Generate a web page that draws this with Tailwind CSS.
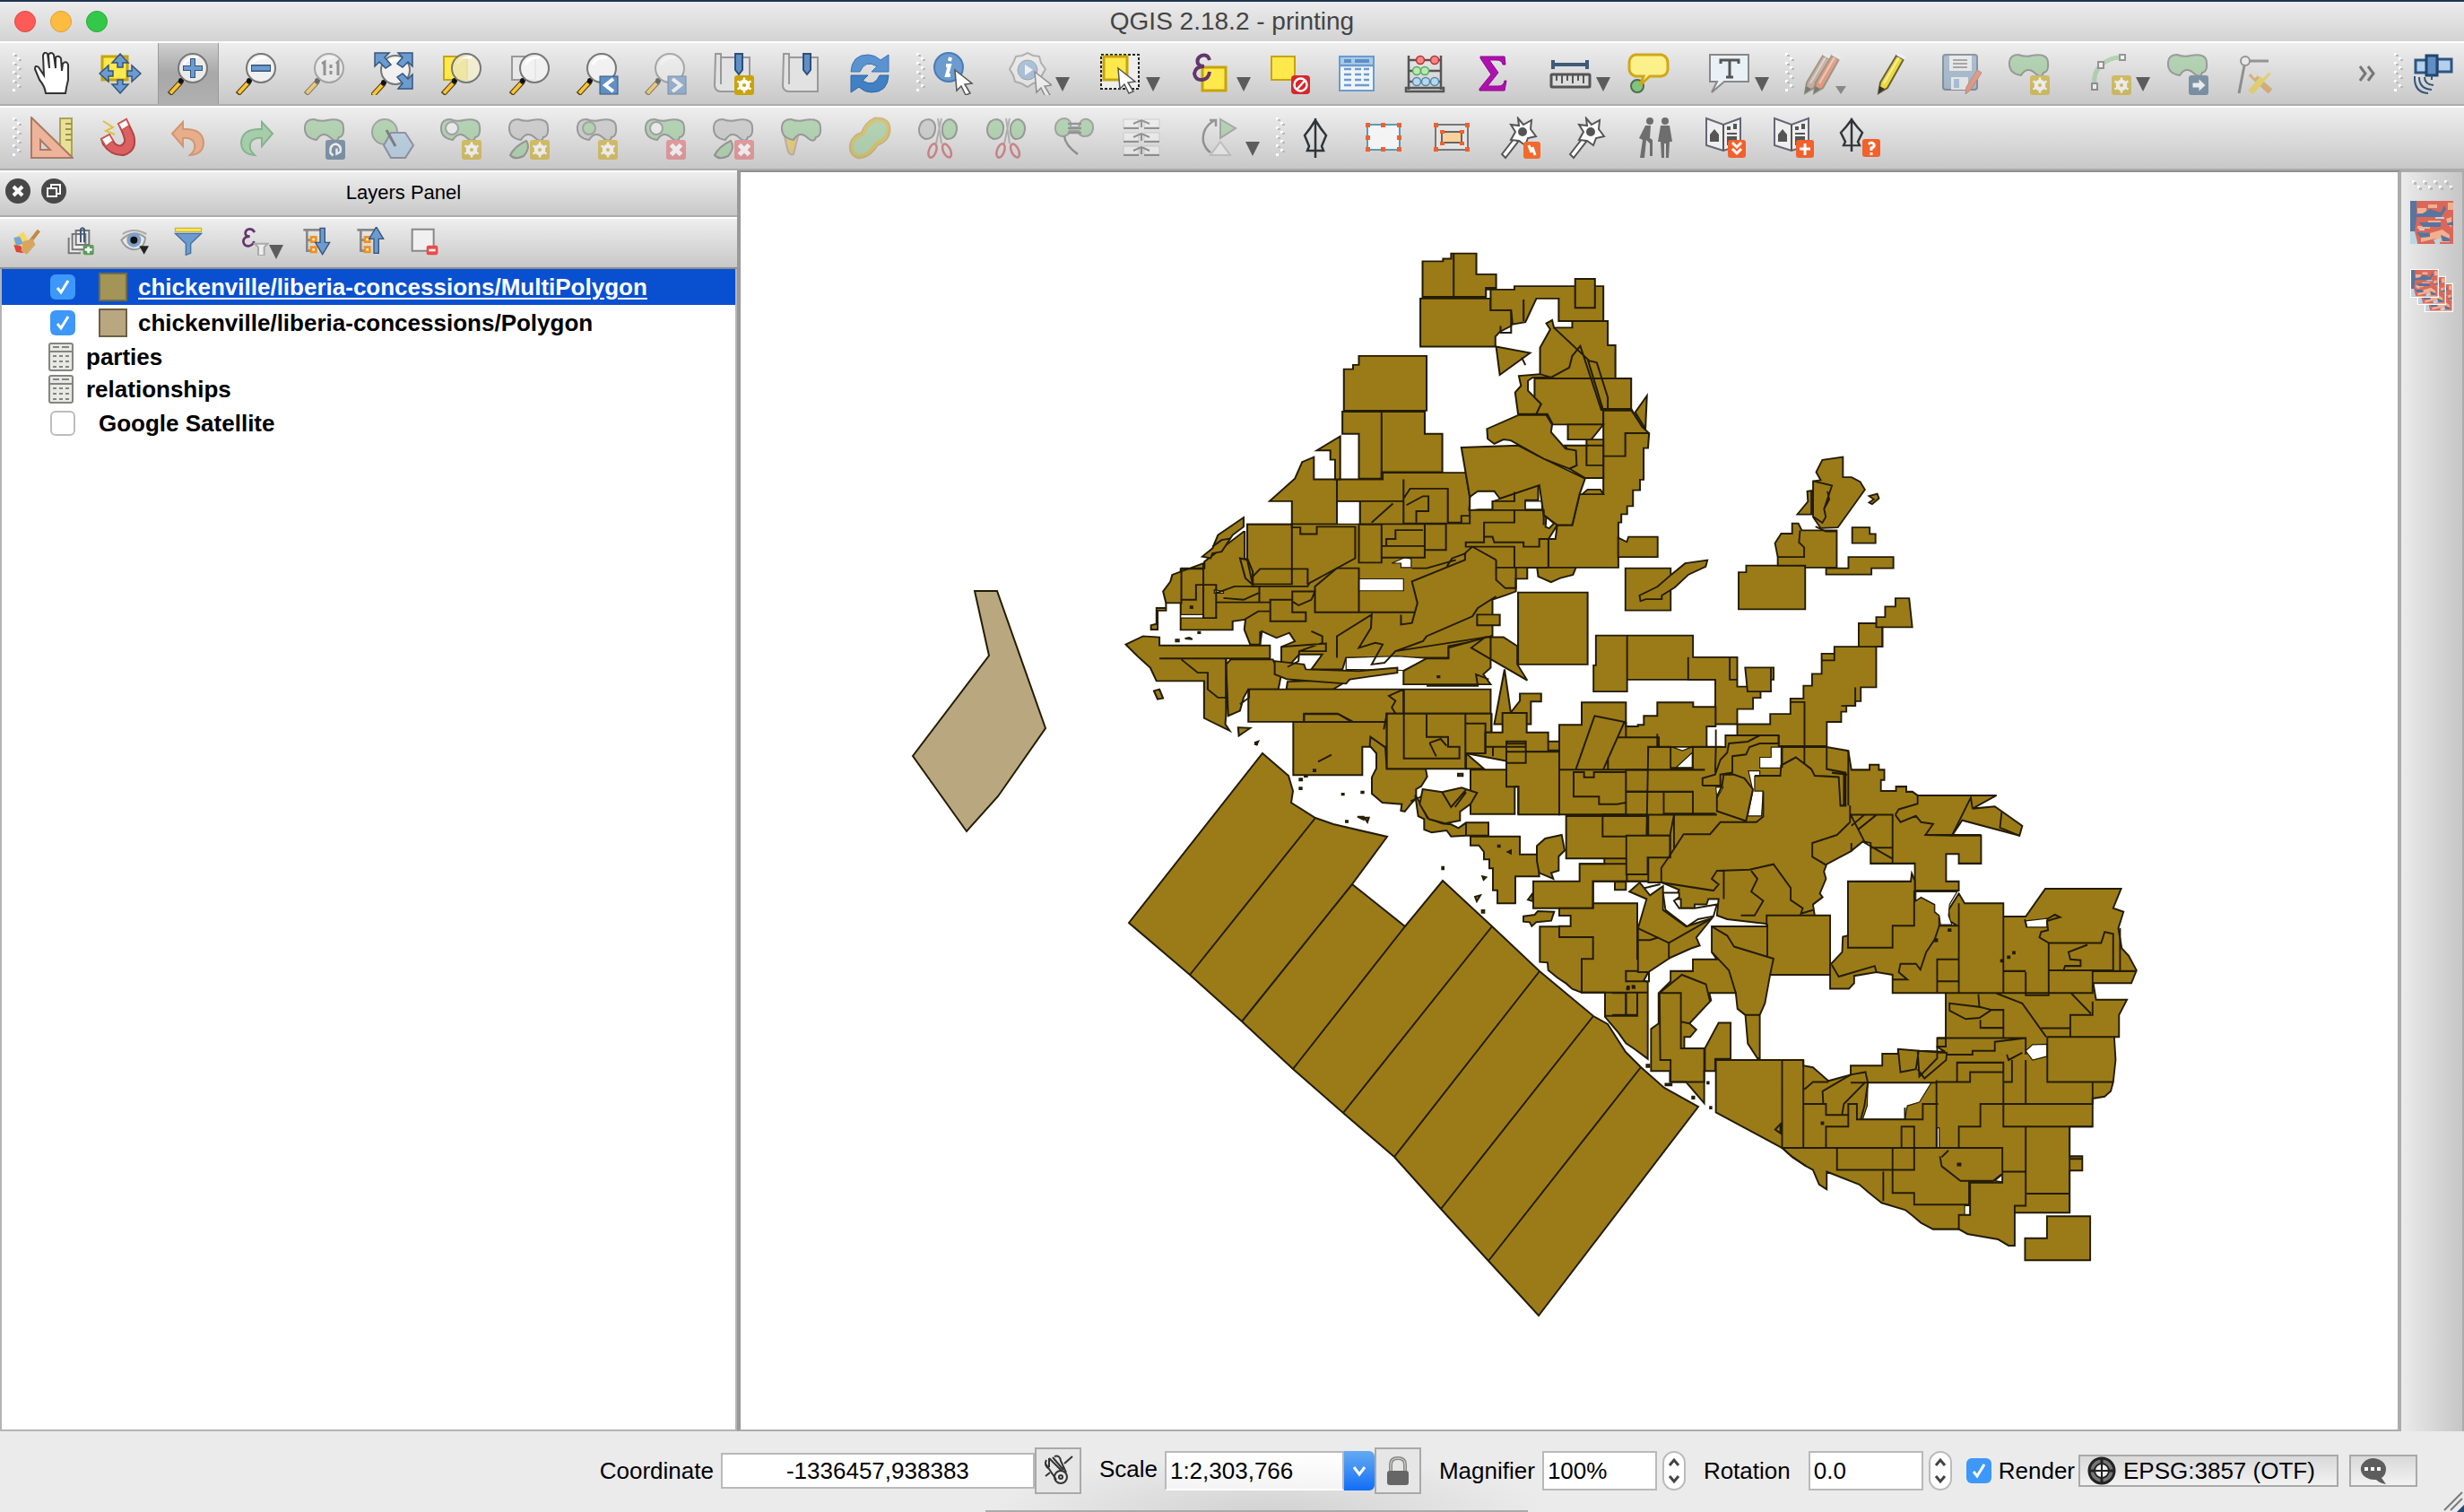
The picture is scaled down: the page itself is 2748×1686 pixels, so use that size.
<!DOCTYPE html>
<html lang="en">
<head>
<meta charset="utf-8">
<title>QGIS 2.18.2 - printing</title>
<script src="https://cdn.jsdelivr.net/npm/@tailwindcss/browser@4"></script>
</head>
<body class="flex min-h-screen flex-col overflow-hidden bg-[#ebebeb] font-['Liberation_Sans',Arial,sans-serif] text-[26px] leading-8 text-black">

<header class="relative flex h-[46px] shrink-0 items-center justify-center border-t-2 border-[#1f3450] bg-linear-to-b from-[#ececec] to-[#d3d3d3]">
  <div class="absolute left-4 flex gap-4">
    <button aria-label="Close" class="size-6 rounded-full border border-[#df4744] bg-[#fc5b57]"></button>
    <button aria-label="Minimize" class="size-6 rounded-full border border-[#de9f34] bg-[#fdbc40]"></button>
    <button aria-label="Zoom" class="size-6 rounded-full border border-[#27aa35] bg-[#34c84a]"></button>
  </div>
  <h1 class="text-[28px] text-[#444]">QGIS 2.18.2 - printing</h1>
</header>

<nav id="bar1" aria-label="Main toolbar" class="flex h-[72px] shrink-0 items-stretch border-t-2 border-b-2 border-t-white border-b-[#acacac] bg-linear-to-b from-[#eeeeee] to-[#c8c8c8]"></nav>
<nav id="bar2" aria-label="Digitizing toolbar" class="flex h-[72px] shrink-0 items-stretch border-t-2 border-b-2 border-t-white border-b-[#acacac] bg-linear-to-b from-[#eeeeee] to-[#c8c8c8]"></nav>

<main class="flex min-h-0 flex-1">
  <aside class="flex w-[822px] shrink-0 flex-col">
    <div class="relative flex h-[52px] items-center justify-center border-t-2 border-b-2 border-t-white border-b-[#acacac] bg-linear-to-b from-[#eeeeee] to-[#c8c8c8] pb-[2px] pl-[78px]">
      <div class="absolute left-[6px] flex gap-3 pb-1">
        <button aria-label="Close panel"><svg class="size-7" viewBox="0 0 28 28"><circle cx="14" cy="14" r="14" fill="#484848"/><path d="M9 9L19 19M19 9L9 19" stroke="#fff" stroke-width="4"/></svg></button>
        <button aria-label="Float panel"><svg class="size-7" viewBox="0 0 28 28"><circle cx="14" cy="14" r="14" fill="#484848"/><path d="M11 11V7H21V17H18M7 11H17V20H7Z" fill="none" stroke="#fff" stroke-width="2"/></svg></button>
      </div>
      <h2 class="text-[22px]">Layers Panel</h2>
    </div>
    <div id="bar3" class="flex h-[58px] shrink-0 items-stretch border-t-2 border-b-2 border-t-white border-b-[#8f8f8f] bg-linear-to-b from-[#eeeeee] to-[#c8c8c8] pb-1"></div>
    <ul class="flex-1 border-x-2 border-b-2 border-[#b4b4b4] bg-white font-bold">
      <li class="flex h-10 items-center bg-[#0950d0] pl-[54px] text-white">
        <span class="grid"><input id="l1" type="checkbox" checked class="col-start-1 row-start-1 size-7 appearance-none rounded-md bg-[#3d98f9]"><svg class="pointer-events-none col-start-1 row-start-1 size-7" viewBox="0 0 28 28"><path d="M8 15L12 20L20 7" fill="none" stroke="#fff" stroke-width="3"/></svg></span>
        <span class="mx-3 ml-[26px] size-8 border-2 border-[#726c44] bg-[#a39555]"></span>
        <label for="l1" class="underline decoration-2 underline-offset-3">chickenville/liberia-concessions/MultiPolygon</label>
      </li>
      <li class="flex h-10 items-center pl-[54px]">
        <span class="grid"><input id="l2" type="checkbox" checked class="col-start-1 row-start-1 size-7 appearance-none rounded-md bg-[#3d98f9]"><svg class="pointer-events-none col-start-1 row-start-1 size-7" viewBox="0 0 28 28"><path d="M8 15L12 20L20 7" fill="none" stroke="#fff" stroke-width="3"/></svg></span>
        <span class="mx-3 ml-[26px] size-8 border-2 border-[#6b6048] bg-[#b9a77f]"></span>
        <label for="l2">chickenville/liberia-concessions/Polygon</label>
      </li>
      <li class="flex h-9 items-center gap-[14px] pl-[52px]"><svg class="h-8 w-7" viewBox="0 0 28 32"><use href="#tbl"/></svg>parties</li>
      <li class="flex h-9 items-center gap-[14px] pl-[52px]"><svg class="h-8 w-7" viewBox="0 0 28 32"><use href="#tbl"/></svg>relationships</li>
      <li class="flex h-10 items-center gap-[26px] pl-[54px]">
        <input id="l3" type="checkbox" class="size-7 appearance-none rounded-md border-2 border-[#bdbdbd] bg-white"><label for="l3">Google Satellite</label>
      </li>
    </ul>
  </aside>

  <section aria-label="Map canvas" class="min-w-0 flex-1 border-2 border-r-4 border-l-4 border-[#acacac] border-t-[#909090] border-l-[#999] bg-white">
    <svg class="block h-full w-full" viewBox="826 192 1848 1402" fill="#9b7b17" stroke="#231c04" stroke-width="2">
      <path fill="#b9a77f" d="M1087 659H1112L1166 812L1113 888L1078 927L1018 843L1103 731Z"/>
      <!-- offshore blocks -->
      <path d="M1408 840L1437 865L1442 882L1440 895L1467 912L1487 919L1547 933L1508 986L1567 1033L1609 982L1664 1033L1717 1083L1777 1133L1793 1142L1813 1173L1830 1190L1856 1213L1894 1234L1716 1467L1660 1406L1607 1348L1555 1290L1498 1241L1442 1192L1385 1139L1327 1087L1259 1029Z"/>
      <path fill="none" d="M1327 1087L1467 912M1385 1139L1508 986M1442 1192L1567 1033M1498 1241L1664 1033M1555 1290L1717 1083M1607 1348L1777 1133M1660 1406L1830 1190"/>

      <!-- north-west concessions -->
      <g transform="translate(1240 260) scale(.40816 .3699)" stroke-width="5">
        <path d="M615 742H740V722H967L978 795L1000 778H1045L1060 800L1165 760V805H1130V835H1180L1217 880L1193 922V1008H1135V1042H1104V1080L1080 1090L1040 1105V1215L990 1230L920 1245V1280H640L630 1315H545L575 1270H512L480 1308H463V1247L500 1230L485 1205L450 1220L410 1200L405 1240H378L362 1195L365 1165L330 1170V1196H188V1012L253 1010V990L360 900H363V980L385 1000L370 980V878H492V808H431L500 740L520 690L552 675V742Z"/>
        <path fill="#fff" stroke-width="3" d="M615 808H678V877H615ZM675 1042H797V1078H675ZM765 995L800 978L818 982V1008H790V995ZM975 835L980 790L1000 778H1045L1062 800L1040 808V832H1003ZM1130 808H1175V832H1130ZM280 1075L305 1080V1085H280ZM188 1150H250V1160H188ZM640 1280L780 1275L860 1282L797 1318L640 1315Z"/>
        <path d="M849 85H905V77H927V61H996V124H1050V165H1022V192H849ZM843 197H1035V232H1091V280L1060 297L1048 312V342H843Z"/>
        <path d="M1035 170H1100V160H1343V265H1221V197H1160L1130 268L1095 275L1091 232H1035Z"/>
        <path d="M1266 138H1320V225H1266ZM1050 342L1143 361L1060 427Z"/>
        <path fill="none" d="M934 61V192M1125 200V265M1022 192V170H1035M1091 275V300H1062V280M1120 375L1130 398"/>
        <path d="M675 370H860V535H634V410H659V397H675ZM630 538H855V605H903V720H737V740H675V605H630Z"/>
        <path fill="none" d="M737 538V740"/>
        <path d="M1187 272L1203 262L1208 285H1258V265H1355V338H1376V438H1200L1170 430V345L1198 290Z"/>
        <path d="M1112 430L1170 425L1200 435H1150L1137 445V475L1173 515L1160 545H1110L1102 480L1118 460Z"/>
        <path d="M1155 438H1419V530H1343V577H1205L1190 545H1160L1173 515L1155 495Z"/>
        <path d="M1462 490L1458 590L1430 540Z"/>
        <path d="M1343 535H1420L1450 585L1468 603L1465 648H1453V743H1443V775H1424V823H1408V847H1392V872H1384V1008H1193V922H1212L1217 880H1258L1278 787H1343Z"/>
        <path fill="none" d="M1208 285L1305 385L1325 390L1355 495V535M1338 535L1280 340L1258 370L1250 405L1200 435M1343 535L1300 380M1343 672H1403V603H1468M1419 530L1450 585"/>
        <path d="M1238 640H1343V738H1293L1250 710L1270 700ZM1246 577H1343L1310 622H1246ZM1297 622H1343V700H1297ZM1285 787L1300 773H1335L1343 787Z"/>
        <path d="M955 646L1110 640L1180 680L1293 740L1278 787L1258 880H1217L1180 850L1168 760L1060 800L1045 778H1000L978 795Z"/>
        <path d="M1025 590L1112 548H1187L1203 577L1200 600L1240 650L1268 655L1270 700L1250 710L1180 680L1090 625L1070 622L1045 635L1027 620Z"/>
        <path d="M560 655L624 612V742H610V683H597V655ZM148 1115L140 1080L160 1050L165 1030L250 995V1010H190V1115ZM247 975L275 950L290 910L360 857V885L330 910L300 960L275 965L270 980Z"/>
        <path d="M107 1195V1182L122 1178V1130H148V1115V1138H125V1195Z"/>
        <path d="M370 878H492V887H515V907H560V885H665V980L540 1055L535 1065H385V1020L370 980Z"/>
        <path fill="#fff" d="M1187 855L1208 875L1195 890L1185 885Z"/>
        <path d="M1162 1008H1268L1260 1030L1225 1040L1200 1052L1165 1035ZM1110 1083H1300V1300H1110ZM998 1150H1060V1182H998Z"/>
        <path d="M38 1240L85 1215L130 1218V1243H432V1282H312V1450L310 1480L322 1500L252 1462V1350H122L105 1310L70 1275ZM312 1300L325 1285H440L462 1335L455 1375H373L360 1400L350 1440L318 1455Z"/>
        <path d="M480 1352L650 1345L605 1375H477Z"/>
        <path d="M445 1290L525 1300L530 1315L675 1320L780 1310V1325L650 1345L640 1358L480 1345L445 1330Z"/>
        <path d="M797 1320L860 1282H920V1250L1035 1215V1310L1015 1330L1035 1360H797ZM982 1250L1020 1218H1070L1108 1245V1300L1135 1348L1060 1300Z"/>
        <path d="M373 1375H1035V1448H750V1473H373Z"/>
        <path d="M1045 1480L1073 1315L1090 1445L1115 1410V1388H1173V1412H1145V1480ZM115 1380L130 1375L140 1402L125 1405ZM345 1490L378 1492L347 1515Z"/>
        <path fill="none" d="M525 1473V1450H620L655 1473M797 1375V1448M797 1375L757 1395L775 1410L765 1430L775 1448M615 742V877H492V1058M615 808H797V742M678 808V877H797V808M797 742V808M797 875H978V795M797 875V800L815 770H918V872M805 820L850 793H865V838H832V872M710 872L768 815M675 878H737V993H675ZM737 877H855V978H737ZM737 943H855M750 943V922H775V895H850M858 877H913V955H858M978 852H955V872H918M978 835H1040V808H1100V780M1040 835H1100V872H1017V932H967V945H1100V1008M1100 835H1180V880M1212 922H1168V945H1125V932H1045L1040 915H1017M1100 945V1008H1193M1050 985L985 945L965 965V985L820 1050L835 1115L820 1175L790 1180V1150M1050 985V1045L1075 1070H1104V1008H1050M968 965L930 980L915 1005M820 1010H860L940 985M555 1065L615 1010H675V1143H555ZM675 1143H830M675 1078V1042M385 1058H492V1012H535V1060M385 1058V1035L405 1012H492M350 980L370 985L385 1060L365 1040ZM433 1105H493V1143H530V1170H433ZM493 1080H555L545 1105L510 1122L493 1110ZM190 1012H250V1150M188 1105H230V1060H285V1160H250V1058M285 1113H403V1065H335L285 1085M305 1100L360 1105L400 1085M285 1113H433M362 1165L400 1140H430M615 1280V1215L710 1150L708 1190L675 1250L720 1235L740 1240L710 1300L745 1295L775 1260L850 1230L860 1215L985 1155L1000 1130L1050 1095M775 1260L1040 1215M545 1200L575 1215V1235L512 1260M463 1247L585 1237V1260H512L510 1290L480 1308M130 1282H312M190 1285L235 1325H262V1375L290 1400H312V1282M275 945L300 925L325 920M375 1375V1400L350 1420M405 1200V1240M860 1365H1000L995 1330L1030 1345"/>
        <path d="M175 1225h8v6h-8zM200 1222l12-3 8 5zM236 1202h5v4h-5zM392 1535l8-3-4 9zM215 1125h5v5h-5zM890 1335h5v4h-5z"/>
      </g>

      <!-- north-east islands and corridor -->
      <g transform="translate(1600 480) scale(.38265 .35714)" stroke-width="5">
        <path d="M535 335L560 348L565 332H650V395H535ZM556 430H688V562H556Z"/>
        <path d="M597 515L650 487L690 450L730 415L795 405L790 425L740 450L700 490L662 515V527H615L600 533Z"/>
        <path d="M470 640H753V708H882V800H950V835H928V870H882V917H818V778H561V815H463V733H470Z"/>
        <path d="M905 740H988V778H980V815H912ZM886 443H908V422H1080V558H886Z"/>
        <path fill="none" d="M561 640V778M739 708V778H818M860 708V778H882M980 740V778"/>
        <path d="M1000 422V395L992 352L1010 322H1042V290H1060L1070 312H1172V428H1080V422Z"/>
        <path d="M1098 188V262L1057 262L1088 222L1086 190ZM1112 130L1130 92L1190 83V146H1215L1240 160L1254 185L1175 303L1125 305L1103 270V158L1125 155Z"/>
        <path fill="none" d="M1065 312L1062 350L1077 365V395H1000M1103 158L1158 172L1135 245L1140 270L1130 288L1105 270M1145 190L1150 215L1135 245M1110 300L1140 315H1172"/>
        <path d="M1266 205L1290 198L1295 212L1275 230L1266 225L1280 215ZM1217 303H1268V323H1285V352H1217ZM1206 395H1337V430H1273V450H1141V430H1206Z"/>
        <path d="M1236 602H1287V583H1313V550H1343V524H1383L1392 614H1305V675H1287V802H1242V845H1226V860H1200V878H1185V910H1143V985H850V955H882V917H978V885H1037V837H1075V797H1100V760H1128V697H1165V675H1236Z"/>
        <path fill="none" d="M1236 675H1305V614H1287V602M1128 718H1165V697M1037 848H1078V988M1226 802V860H1185"/>
      </g>

      <!-- central coast -->
      <g transform="translate(1400 760) scale(.33333)" stroke-width="6">
        <path d="M127 135H440V218H358V313H127Z"/>
        <path d="M385 185L435 220L440 292H570L575 318L555 350L538 360V390L520 410L500 435L487 432L490 410L425 405L390 375V320L405 290V240L383 215Z"/>
        <path d="M440 107H790V170H770V240H705V292H440Z"/>
        <path d="M705 240L765 292H705Z"/>
        <path d="M770 170H827V105H908V170H980V200H1017V235H905V272L835 265L705 240H770Z"/>
        <path d="M720 295H840V235H1017V445H880V352H868V443H720Z"/>
        <path d="M535 380L545 395L575 455L625 475L655 478L680 490L705 472H780V515H705L655 518L640 498L590 505L565 495V460L545 450Z"/>
        <path d="M560 360L625 370L690 355L742 372L720 410L685 435V465L635 475L580 460L550 410Z"/>
        <path fill="none" d="M497 27V257H683V218H645V185H573V107M703 107V292M705 140H770V240M583 205L620 192L640 215M583 205L605 250M790 107V170M770 218H905M840 200H905V272H840ZM840 208H905M980 200V230H1017M795 220V250M840 272V352H880V445M625 370L655 420L705 362M668 420L705 370M705 472V515M520 400L555 385"/>
        <path d="M720 518H885V578H942L945 600L950 652H870V742H810V698H795V625H783V595H765V570L748 548H720Z"/>
        <path d="M942 550L970 525L1025 513L1035 565L1015 585V632L990 640L997 660L950 640L942 600Z"/>
        <path d="M1017 145H1092V70H1240V150H1280V145H1300V115H1345V70H1465V85H1540V150H1510V218H1560V445H1017Z"/>
        <path d="M1040 450H1400V400H1560V668H1245V668H1130V758H930V668H1085V610H1168V592H1040Z"/>
        <path d="M897 785L935 780L945 768L1000 770L990 800L940 805L925 818L918 805L897 803ZM912 730L928 708V735ZM1203 670H1240V697H1203Z"/>
        <path d="M1017 758H1130V742H1278V928H1317V968L1300 1000L1313 1005V1262L1270 1230L1240 1210L1215 1175L1170 1122V1040H1092L1060 1028L1040 1010L1010 990L980 965L978 940L952 938V820H1017V818H1055V783H1017Z"/>
        <path fill="none" d="M1017 235V445M1073 292L1135 115L1235 135L1165 292M1017 295H1315V218H1390V292H1462V218H1510M1210 187H1350V218M1240 135V187M1345 175V218M1180 255V292M1240 292V368H1465V443H1365V368M1065 303H1100V320H1133V303H1240V405L1210 410H1150V385H1065ZM1240 368V445H1162V518H1400V445M1240 518H1385V592H1310V645H1245V610M1085 610H1243V668M1168 592H1243M1130 758V668H1360M1310 592H1365M1017 818V855H1130V928H1092V1040H1313M1240 1040V1118H1170M1240 1118H1278V1040M1280 830L1355 870L1385 875V928M1240 968H1317V1003H1240ZM163 130V107H275L325 133M210 268L255 245M440 107L430 160"/>
        <path d="M148 325h8v6h-8zM165 315h8v3h-8zM148 355h7v5h-7zM195 295h6v5h-6zM290 375h6v4h-6zM355 368h7v5h-7zM342 452l20 0 0 10zM365 455l15 0-5 15zM303 466h6v4h-6zM678 308l16 0 0 8-16 0zM625 620h5v8h-5zM760 652l12 3-8 8zM735 720l18-5-12 20zM758 765h8v8h-8zM812 548h6v5h-6zM845 570l10-5 0 10zM0 205h6v5h-6zM1245 1020h5v5h-5zM1262 1018h5v5h-5z"/>
      </g>

      <!-- south-east -->
      <g transform="translate(1800 780) scale(.38265 .40816)" stroke-width="5">
        <path d="M100 130H325V98H480V130H620L683 140L692 192H745V178H772V192H788V220H778V250H822V238H852V252H870L885 262H1115L1045 298L1110 292L1190 345L1182 372L1015 330L985 372H1070V448H1005V422H968V497H1005V522H877V448H748V392L725 388L690 415L620 450L612 470L618 490L600 530L608 540L580 560L585 590L448 613L330 600L300 590L305 545H275L270 560H235V570H195V545H175L190 520L140 500H100V315H175L163 372H95Z"/>
        <path fill="#fff" d="M425 158H458V130H487V187H425ZM180 187L228 145V187ZM170 130H225L200 140ZM392 195H425V210H410V250H435L430 318H390L405 250ZM297 240H318L300 270ZM100 372H165V432H100Z" stroke-width="3"/>
        <path d="M36 372H163V432H98V478H36Z"/>
        <path fill="none" d="M165 130V187H230V130M297 82V130L295 200M345 155V200M297 312H175V410M35 252H230V312H145V252M35 192H265M230 252V312M175 315H300M320 205H350L380 215L405 245L385 332L300 305V265L315 235ZM258 235H310V205L345 200V155L385 150L395 130L425 120H480V98M258 235V215L295 205L310 165L330 145L335 120L390 115L425 98M490 187V130M410 208H485L487 180L530 158L575 190L585 208L655 212L660 290H675V200L620 190V130M555 130V175M683 140V290M670 205V290M635 200L680 205M435 252V320L415 335H310L280 368H203L160 430L138 460V500L290 522L305 505L285 490L300 468L395 465L465 450L515 515V548L550 570L545 585L580 575M320 468V545M400 468L418 490L400 525L435 550L410 590L370 590M688 290V335L650 370L578 392V430L618 452M690 315H812V448M690 315L730 388M692 345L730 315M712 355L765 315M748 405H812M692 392V415M725 388L765 410L812 435M820 315L835 335L880 318L895 335L930 340L908 370L985 372L1040 268L1045 298M820 315L830 300L885 285V262M1130 308L1125 350L1182 372M905 370H1070M135 505L45 525"/>
        <path d="M45 525L75 500L105 535L143 510V575L210 620L285 598L240 650L250 672L225 680L165 705L100 745H70V625L95 545Z"/>
        <path fill="none" d="M70 625L160 665L285 598M160 665V705M70 657H105L130 650"/>
        <path fill="#fff" d="M143 528H190V540L175 550L190 570H235L300 560L290 592L245 600L213 620L150 575Z"/>
        <path d="M165 742H230V710H300L285 690V620H445V590H630V752H455L440 830L425 862V980H418L390 940L383 862L360 845L355 802H278L283 822L220 885L240 902L222 922H205V953H265L305 883H340V982H295V1015H263V1103L210 1045H163V1015H108V900L130 885V802L165 770Z"/>
        <path fill="none" d="M285 620L330 645L350 675L465 708L455 752M447 613V700M285 690L335 740L355 802M135 800L198 752L268 778L280 825M133 802H195V953H263V1045H165V985H135ZM383 862H425M265 953V1015M195 880L220 885M-5 802H35V862H-5M35 862H68V802"/>
        <path d="M682 497H865L868 475L877 495V550L895 540L935 560V580L948 590V618H1000L978 605L975 575L1005 530L1022 557H1135V593H1200L1257 517H1478L1455 570L1485 580L1470 625L1480 680L1500 700L1523 740L1508 775H1397L1405 820H1495L1472 862V922H1458L1462 985L1455 1045L1448 1070L1430 1085L1395 1090V1167H1328V1248H1365V1287H1328V1402H1168V1492H1150L1120 1475L1030 1460L1005 1447H930L895 1430L870 1410L850 1395L780 1375L740 1345L715 1325L620 1290V1338L598 1325L580 1285L560 1275L520 1250L490 1225L297 1128V985H552V1000L580 1005L625 1042L690 1025V1000H782V968H828V955L890 960L965 962L942 950V925H967V802H812V752L765 745L700 755V775L685 790H630V725L665 690L667 648L682 645Z"/>
        <path fill="#fff" d="M740 1047H925L890 1100L855 1110L848 1147H725L738 1110ZM1200 605L1262 598V622H1203ZM1200 960L1220 943L1262 942V975L1220 985ZM1022 1383H1038V1408H1022ZM942 1170H948V1225H942ZM1110 1315L1132 1298V1318ZM880 525H1000L978 560L975 590L985 615H952L948 590L935 580V560L895 540L880 550Z" stroke-width="3"/>
        <path fill="none" d="M875 522V618H812V678H682V640M948 618L935 655L910 690L893 738L880 722H835L830 745L855 765H812M635 725L655 757L760 728L765 745M942 800V710H1005V770H942M1005 557V802H968M1135 593V802H1200M1200 745V808H1267V665H1420L1430 635L1455 640V740H1267M1135 742H1200M1267 802H1395V742H1520M1005 802H1267M1267 665L1240 650L1245 635L1265 630L1262 605L1300 595L1285 588L1262 600M1197 600L1203 622M1475 625V740M1380 670L1325 690L1330 710L1360 712V728H1315L1310 740M1062 805L1065 840L978 830V850L1025 873L1065 870L1100 848L1065 840M1100 848H1135V925M1068 875V897H1135M1115 803L1190 830L1260 922M1245 898H1330V922M1330 898V862H1395V825M1333 803L1390 858M942 925H1200V970M967 925V948H942V980L890 1030L885 960M967 970H1045V960H1110V935L1200 925M1263 922H1458M1263 922V1045H1455M1200 985V1105H1395V1045M1000 1045V992H1135V1105M1160 985V1045H1135M942 1045H1038V1018H1135M1135 1105H1068V1167H1005V1225M1135 1105V1167H1395M1200 1105H1135M1200 1167V1350M1328 1167V1402M1203 1350H1328M1200 1350V1383H1168V1402M1328 1255H1365M490 985V1225H1132V1290H1200M552 985V1225M552 1105H618V1135H683V1105H708V1147H900V1105H945M618 1225V1167H683V1135M650 1225V1285H875V1167H838V1225M812 1225V1348H875V1380H1035V1320H1132V1290M785 1290V1370M955 1250L975 1232M950 1248L955 1275L1010 1315H1105L1132 1295M1038 1320V1408H1005V1450M610 1105L608 1070L690 1025L733 1018L740 1047L730 1110L720 1145M555 1065L580 1045H625M665 1133L670 1105L733 1045M828 955L835 1018L880 1010L888 960L970 965L968 985L905 1035L885 1010M690 1047H940M940 1040V1225M848 1147V1115M490 1225L520 1250L560 1275M470 1175L485 1160V1185ZM1145 970L1150 985L1190 965"/>
        <path d="M1262 1412H1388V1532H1198V1472H1262Z"/>
        <path d="M605 1155h5v5h-5zM1002 1268h8v5h-8zM975 628h6v4h-6zM935 655h7v5h-7zM1128 712h6v4h-6zM1148 702h5v4h-5zM1163 690h5v4h-5zM95 998h8v6h-8zM150 1050h18v4h-18zM228 1085h6v5h-6zM272 1045h4v4h-4zM280 1113h4v4h-4zM38 788h5v4h-5zM55 784h5v4h-5z"/>
      </g>
    </svg>
  </section>

  <aside aria-label="Raster toolbar" class="flex w-[70px] shrink-0 flex-col items-center border-t-2 border-r-2 border-[#acacac] bg-linear-to-r from-[#ebebeb] to-[#c6c6c6] pt-2">
    <svg class="mb-3 h-3 w-12" viewBox="0 0 48 12"><path d="M2 1h3v3H2zM8 7h3v3H8zM14 1h3v3h-3zM20 7h3v3h-3zM26 1h3v3h-3zM32 7h3v3h-3zM38 1h3v3h-3zM44 7h3v3h-3z" fill="#fff"/><path d="M4 3h3v3H4zM10 9h3v3h-3zM16 3h3v3h-3zM22 9h3v3h-3zM28 3h3v3h-3zM34 9h3v3h-3zM40 3h3v3h-3zM45 9h3v3h-3z" fill="#b9b9b9"/></svg>
    <button aria-label="Local stretch" class="mb-7"><svg class="size-12" viewBox="0 0 48 48"><use href="#heat"/></svg></button>
    <button aria-label="Full stretch"><svg class="size-12" viewBox="0 0 48 48"><g transform="translate(17 17) scale(.62)"><path fill="#fff" d="M-2-2H50V50H-2Z"/><use href="#heat" width="48" height="48"/></g><g transform="translate(9 9) scale(.62)"><path fill="#fff" d="M-2-2H50V50H-2Z"/><use href="#heat" width="48" height="48"/></g><g transform="translate(1 1) scale(.62)"><path fill="#fff" d="M-2-2H50V50H-2Z"/><use href="#heat" width="48" height="48"/></g></svg></button>
  </aside>
</main>

<footer class="relative flex h-[90px] shrink-0 items-center justify-end bg-[#ebebeb] pr-[52px] pb-[2px]">
  <div class="absolute bottom-0 left-[40%] h-16 w-[23%] bg-radial-[at_50%_100%] from-[#d2d2d2] to-[#ebebeb00] to-70%"></div>
  <div class="absolute bottom-0 left-[40%] h-[2px] w-[22%] bg-[#aaa]"></div>
  <label for="coord" class="relative mr-2">Coordinate</label>
  <input id="coord" value="-1336457,938383" class="relative h-10 w-[350px] border-2 border-[#b9b9b9] bg-white text-center">
  <button aria-label="Toggle extents" class="relative mr-5 grid h-[52px] w-[52px] place-items-center border-2 border-[#a9a9a9] bg-[#e6e6e6]"><svg class="size-9" viewBox="0 0 36 36" fill="none" stroke="#333" stroke-width="2"><circle cx="21" cy="25" r="7"/><circle cx="21" cy="25" r="2"/><path d="M4 10L16 28M8 4L22 18M12 3L24 17M14 2Q20 0 21 7L27 20M5 6Q2 12 8 16M25 10L34 2M4 24L9 20M8 4V14"/></svg></button>
  <label for="scale" class="relative mr-2 pb-1">Scale</label>
  <div class="relative flex h-11 w-[234px]">
    <input id="scale" value="1:2,303,766" class="w-[200px] border-2 border-[#b9b9b9] border-b-white bg-linear-to-b from-white to-[#f4f4f4] pl-1">
    <button aria-label="Choose scale" class="grid flex-1 place-items-center rounded-r-md bg-linear-to-b from-[#62aaf3] to-[#0f6df6]"><svg class="size-4" viewBox="0 0 16 16"><path d="M2 4L8 12L14 4" fill="none" stroke="#fff" stroke-width="3"/></svg></button>
  </div>
  <button aria-label="Lock scale" class="relative mr-5 grid h-[52px] w-[52px] place-items-center border-2 border-[#a9a9a9] bg-[#e6e6e6]"><svg class="size-9" viewBox="0 0 36 36"><path d="M10 19V11Q10 4 18 4T26 11V19" fill="none" stroke="#8a8a84" stroke-width="4"/><path d="M10 19V11Q10 4 18 4T26 11V19" fill="none" stroke="#ddd" stroke-width="1"/><rect x="6" y="18" width="24" height="16" rx="3" fill="#666"/></svg></button>
  <label for="mag" class="relative mr-2">Magnifier</label>
  <input id="mag" value="100%" class="relative mr-[6px] h-11 w-[128px] border-2 border-[#b9b9b9] bg-white pl-1">
  <button aria-label="Step magnifier" class="mr-5"><svg class="h-11 w-[26px]" viewBox="0 0 26 44"><use href="#spin"/></svg></button>
  <label for="rot" class="mr-5">Rotation</label>
  <input id="rot" value="0.0" class="mr-[6px] h-11 w-[128px] border-2 border-[#b9b9b9] bg-white pl-1">
  <button aria-label="Step rotation" class="mr-4"><svg class="h-11 w-[26px]" viewBox="0 0 26 44"><use href="#spin"/></svg></button>
  <span class="mr-2 grid"><input id="render" type="checkbox" checked class="col-start-1 row-start-1 size-7 appearance-none rounded-md bg-[#3d98f9]"><svg class="pointer-events-none col-start-1 row-start-1 size-7" viewBox="0 0 28 28"><path d="M8 15L12 20L20 7" fill="none" stroke="#fff" stroke-width="3"/></svg></span>
  <label for="render" class="mr-1">Render</label>
  <button class="mr-3 flex h-9 w-[290px] items-center gap-2 border-2 border-[#a9a9a9] bg-linear-to-b from-[#d9d9d9] to-[#f2f2f2] pl-2"><svg class="size-8" viewBox="0 0 32 32" fill="none" stroke="#222" stroke-width="2"><circle cx="16" cy="16" r="14" fill="#777" stroke-width="3"/><path d="M2 16H30M16 2V30" stroke-width="3"/><circle cx="16" cy="16" r="8" fill="#f0f0f0"/><path d="M8 16H24M16 8V24"/></svg>EPSG:3857 (OTF)</button>
  <button aria-label="Messages" class="flex h-9 w-[76px] items-center border-2 border-[#a9a9a9] bg-linear-to-b from-[#d9d9d9] to-[#f2f2f2] pl-2"><svg class="size-8" viewBox="0 0 32 32"><path fill="#5d5d5d" d="M16 2A15 12 0 0 1 31 14Q31 21 26 24L31 31Q24 30 20 26A15 12 0 1 1 16 2Z"/><path fill="#fff" d="M7 12h4v4H7zM14 12h4v4h-4zM21 12h4v4h-4z"/></svg></button>
  <svg class="absolute right-0 bottom-0 size-6" viewBox="0 0 24 24" stroke="#7a7a7a" stroke-width="2"><path d="M2 22L22 2M9 22L22 9"/><path d="M24 16V24H16Z" fill="#244a78" stroke="none"/></svg>
</footer>

<svg class="hidden">
  <symbol id="tbl" viewBox="0 0 28 32"><rect x="1" y="1" width="26" height="30" rx="2" fill="#e8e8e4" stroke="#858580" stroke-width="2"/><path d="M2 10H26M5 5H12M15 5H23M5 15H9M12 15H16M19 15H23M5 21H9M12 21H16M19 21H23M5 27H9M12 27H16M19 27H23" stroke="#858580" stroke-width="2"/></symbol>
  <symbol id="spin" viewBox="0 0 26 44"><rect x="1" y="1" width="24" height="42" rx="12" fill="#fff" stroke="#bbb" stroke-width="2"/><path d="M8 16L13 10L18 16M8 28L13 34L18 28" fill="none" stroke="#444" stroke-width="3"/></symbol>
  <symbol id="heat" viewBox="0 0 48 48"><rect width="48" height="48" fill="#d9685b"/><path fill="#f2b08f" d="M8 8H20V4H30V8H18V14H8ZM8 28H20V22H34V25H22V31H8ZM22 36L36 32L44 38V46H34L28 42L12 46V40ZM42 2H48V10H42ZM40 20L46 18V30L42 26Z"/><path fill="#56759f" d="M0 0H7V20L5 34H0ZM14 14L22 9L34 13L38 5L40 9L34 18H6V15ZM10 24H34V29H14ZM7 35L22 36V40L12 41ZM41 25L48 23V27H42ZM34 38L44 42V45H36Z"/><path fill="#b8d6e4" d="M0 34H5L8 46V48H0ZM26 43L34 42L33 48H28ZM10 31H16V33H10ZM28 18H38V20H28Z"/></symbol>
</svg>

<script>
  // Icon parts, drawn on a 48 by 48 grid
  const svg = (body, size) => `<svg class="${size || 'size-12 shrink-0'}" viewBox="0 0 48 48" fill="none">${body}</svg>`;
  const faded = body => `<g opacity=".55">${body}</g>`;
  const glass = (x = 29, y = 18, fill = '#f4f4f4dd') => `<path d="M${x - 13} ${y + 15}L${x - 26} ${y + 29}" stroke="#4a3a10" stroke-width="6"/><path d="M${x - 15} ${y + 17}L${x - 25} ${y + 28}" stroke="#fcc432" stroke-width="4"/><circle cx="${x - 13}" cy="${y + 14}" r="3" fill="#111"/><circle cx="${x}" cy="${y}" r="16" fill="${fill}" stroke="#777" stroke-width="2"/><path d="M${x - 10} ${y - 4}Q${x - 6} ${y - 13} ${x + 6} ${y - 12}" stroke="#fff" stroke-width="3"/>`;
  const badge = (color, body) => `<rect x="25" y="26" width="22" height="22" rx="3" fill="${color}"/><g transform="translate(25.500 26.500)" stroke="#fff" stroke-width="2.500">${body}</g>`;
  const star = badge('#c8a40a', '<path d="M10.500 2V19M3 6L18 15M3 15L18 6"/><circle cx="10.500" cy="10.500" r="5" fill="#fff"/><circle cx="10.500" cy="10.500" r="2" fill="#c8a40a" stroke="none"/>');
  const cross = badge('#e2656b', '<path d="M5 5L16 16M16 5L5 16" stroke-width="5"/>');
  const blob = (f = '#8cc58c') => `<path d="M2 11Q3 3 12 3Q20 6 27 4Q45 1 45 12Q46 22 40 23Q38 30 31 24Q22 15 15 26Q1 24 2 11Z" fill="${f}" stroke="#606060" stroke-width="2"/>`;
  const drop = '<path d="M21 27Q26 35 18 44Q8 49 3 43Q8 33 21 27Z" fill="#8cc58c" stroke="#606060" stroke-width="2"/>';
  const cursor = (x, y) => `<path transform="translate(${x} ${y})" d="M0 0L19 15L11 16L17 26L12 28L7 18L2 23Z" fill="#fff" stroke="#555" stroke-width="1.500"/>`;
  const pencil = (x, c) => `<path d="M${x} 46L${x + 2} 34L${x + 20} 4L${x + 28} 8L${x + 10} 40Z" fill="${c}" stroke="#66603a" stroke-width="2"/><path d="M${x + 6} 35L${x + 23} 6" stroke="#fff8" stroke-width="2"/><path d="M${x} 46L${x + 1} 38L${x + 7} 41Z" fill="#333"/><path d="M${x + 21} 2L${x + 30} 7" stroke="#eee" stroke-width="4"/>`;
  const scissors = l => `<path d="M14 3Q22 5 21 14Q20 25 10 25Q2 22 3 13Q5 3 14 3Z" fill="${l}" stroke="#606060" stroke-width="2"/><path d="M38 3Q46 6 45 15Q43 26 34 25Q28 22 29 12Q31 3 38 3Z" fill="#8cc58c" stroke="#606060" stroke-width="2"/><path d="M24 2L28 30M28 2L22 30" stroke="#888" stroke-width="2"/><ellipse cx="18" cy="38" rx="4" ry="8" transform="rotate(20 18 38)" stroke="#c04048" stroke-width="2.500"/><ellipse cx="34" cy="38" rx="4" ry="8" transform="rotate(-25 34 38)" stroke="#c04048" stroke-width="2.500"/>`;
  const pen = '<path d="M24 4Q18 14 12 21L17 33L15 38H33L31 33L36 21Q30 14 24 4ZM24 2V46" stroke="#30353a" stroke-width="2.500"/>';
  const wand = '<path d="M4 42L18 24L22 28L8 46Z" fill="#fff" stroke="#555" stroke-width="2"/><path d="M22 2L28 9L37 4L36 14L42 22L33 24L30 32L23 27L14 26L19 17L14 9L23 10Z" fill="#fff" stroke="#555" stroke-width="2"/><circle cx="27" cy="17" r="5" fill="#555"/>';
  const book = '<path d="M4 2L23 9L42 2V32L23 38L4 32Z" fill="#eee" stroke="#667" stroke-width="2"/><path d="M23 9V38" stroke="#555" stroke-width="2"/><path d="M8 28V20L13 14L18 20V28ZM27 11H31V15H27ZM34 8H38V14H34ZM27 18H38V20H27ZM27 22H38V32H27Z" fill="#555"/>';
  const page = '<path d="M4 2H10V6H42V44H10Q4 44 3 38Z" fill="#e2e2e2" stroke="#999" stroke-width="2"/><path d="M10 2V36" stroke="#999" stroke-width="2"/><path d="M26 2H34V20L30 25L26 20Z" fill="#5f8fc4" stroke="#2e4f7a" stroke-width="2"/>';
  const grip = '<svg class="ml-3 h-12 w-3 shrink-0 self-center" viewBox="0 0 12 48"><path d="M2 1h3v3H2zM7 6h3v3H7zM2 11h3v3H2zM7 16h3v3H7zM2 21h3v3H2zM7 26h3v3H7zM2 31h3v3H2zM7 36h3v3H7zM2 41h3v3H2z" fill="#fff"/><path d="M4 3h3v2H4zM9 8h3v2H9zM4 13h3v2H4zM9 18h3v2H9zM4 23h3v2H4zM9 28h3v2H9zM4 33h3v2H4zM9 38h3v2H9z" fill="#b9b9b9"/></svg>';
  const arrow = '<svg class="mt-6 h-4 w-4 shrink-0" viewBox="0 0 16 16"><path d="M0 0H16L8 16Z" fill="#5c5c5c"/></svg>';

  const plain = (t, i) => `<button title="${t}" aria-label="${t}" class="mx-1 grid w-[68px] shrink-0 place-items-center">${svg(i)}</button>`;
  const active = (t, i) => `<button title="${t}" aria-label="${t}" class="mx-1 grid w-[68px] shrink-0 place-items-center border-x border-[#9a9a9a] bg-linear-to-b from-[#cfcfcf] via-[#a8a8a8] to-[#b0b0b0]">${svg(i)}</button>`;
  const menu = (t, i) => `<button title="${t}" aria-label="${t}" class="flex w-[101px] shrink-0 items-center justify-end gap-1 pr-1">${svg(i)}${arrow}</button>`;
  const menuS = (t, i) => `<button title="${t}" aria-label="${t}" class="flex w-[97px] shrink-0 items-center justify-end gap-1 pr-1">${svg(i)}${arrow}</button>`;
  const handle = `<span class="flex w-5 shrink-0">${grip}</span>`;

  document.getElementById('bar1').innerHTML = [
    handle,
    plain('Pan', '<path d="M17 46Q16 38 10 31L5 19Q5 14 9 17L15 26L14 4Q15-1 19 2L21 18L20 3Q23-1 26 3L28 18L28 6Q31 3 34 7L35 21L36 13Q40 9 42 14L42 31Q40 39 39 46Z" fill="#fff" stroke="#333" stroke-width="2"/>'),
    plain('Pan to selection', '<path d="M4 5H32V31H4Z" fill="#fde94c" stroke="#c8a40a" stroke-width="3"/><path d="M24 2L33 12H27V17H21V12H15ZM24 46L33 36H27V31H21V36H15ZM1 24L11 15V21H16V27H11V33ZM47 24L37 15V21H32V27H37V33Z" fill="#6b9bcf" stroke="#34557c" stroke-width="1.500"/>'),
    active('Zoom in', glass() + '<path d="M29 7V29M18 18H40" stroke="#34557c" stroke-width="6"/><path d="M29 8V28M19 18H39" stroke="#6b9bcf" stroke-width="4"/>'),
    plain('Zoom out', glass() + '<path d="M18 18H40" stroke="#34557c" stroke-width="8"/><path d="M19 18H39" stroke="#6b9bcf" stroke-width="5"/>'),
    plain('Zoom to native resolution', faded(glass() + '<path d="M21 13L24 11V26M37 13L39 11V26M31 14V18M31 21V25" stroke="#555" stroke-width="3"/>')),
    plain('Zoom full', glass(27, 20) + '<path d="M4 1H20L15 6L22 14L16 18L9 11L4 16ZM46 1H30L35 6L29 13L35 17L41 11L46 16ZM46 41H30L35 35L29 28L35 24L41 30L46 25Z" fill="#6b9bcf" stroke="#34557c" stroke-width="1.500"/>'),
    plain('Zoom to selection', '<path d="M5 5H31V31H5Z" fill="#fde94c" stroke="#c8a40a" stroke-width="2"/>' + glass(30, 18, '#f4f0d0cc') + '<path d="M19 7H31V30H20Q12 18 19 7Z" fill="#e8df9a99"/>'),
    plain('Zoom to layer', '<path d="M5 5H31V31H5Z" fill="#e8e8e8" stroke="#999" stroke-width="2"/>' + glass(30, 18)),
    plain('Zoom last', glass() + '<rect x="27" y="27" width="20" height="20" fill="#5f8fc4" stroke="#34557c"/><path d="M42 30L33 37L42 44" stroke="#fff" stroke-width="4"/>'),
    plain('Zoom next', faded(glass() + '<rect x="27" y="27" width="20" height="20" fill="#5f8fc4" stroke="#34557c"/><path d="M32 30L41 37L32 44" stroke="#fff" stroke-width="4"/>')),
    plain('New bookmark', page + star),
    plain('Show bookmarks', page),
    plain('Refresh', '<path d="M3 22Q4 3 22 3Q30 3 36 9L45 3V22H26L32 16Q19 8 13 22Z" fill="#5a93cf" stroke="#3a74b5"/><path d="M45 26Q44 45 26 45Q18 45 12 39L3 45V26H22L16 32Q29 40 35 26Z" fill="#4280c4" stroke="#2c65a5"/>'),
    '<span class="flex w-6 shrink-0">' + grip + '</span>',
    `<button title="Identify" aria-label="Identify" class="grid w-16 shrink-0 place-items-center">${svg('<circle cx="18" cy="17" r="16" fill="#6b9bcf" stroke="#4a7cb5" stroke-width="2"/><path d="M20 6L19 10M15 15H19L16 26H20" stroke="#fff" stroke-width="4"/>' + cursor(25, 20))}</button>`,
    menu('Run feature action', faded('<path d="M21 1L27 4L34 5L36 12L41 19L37 26L35 33L27 35L21 39L14 35L7 33L5 26L1 19L5 12L8 5L15 4Z" fill="#eee" stroke="#888" stroke-width="2"/><circle cx="21" cy="20" r="11" fill="#7fa8d6" stroke="#777"/><path d="M18 14L27 20L18 26Z" fill="#fff"/>' + cursor(29, 22))),
    menu('Select features', '<path d="M2 3H44V41H2Z" fill="#eee" stroke="#222" stroke-width="2" stroke-dasharray="3 2"/><path d="M5 5H31V31H5Z" fill="#fde94c" stroke="#c8a40a" stroke-width="3"/>' + cursor(21, 18)),
    menu('Select by expression', '<path d="M14 17H40V43H14Z" fill="#fde94c" stroke="#c8a40a" stroke-width="3"/><path d="M22 9Q20 2 13 4Q7 7 9 13Q11 16 16 16Q6 16 5 24Q6 32 14 31Q21 30 22 22" stroke="#62356b" stroke-width="4"/>'),
    plain('Deselect', '<path d="M5 5H31V31H5Z" fill="#fde94c" stroke="#c8a40a" stroke-width="2"/><rect x="27" y="26" width="21" height="21" rx="4" fill="#d8262c"/><circle cx="37.500" cy="36.500" r="7" stroke="#fff" stroke-width="2.500"/><path d="M33 42L43 31" stroke="#fff" stroke-width="2.500"/>'),
    plain('Attribute table', '<path d="M5 5H43V43H5Z" fill="#f0f5fa" stroke="#6b9bcf" stroke-width="2"/><path d="M6 6H42V15H6Z" fill="#a8cbe8"/><path d="M10 10H18M22 10H38" stroke="#5f8fc4" stroke-width="4"/><path d="M6 15H42M10 19H18M22 19H29M32 19H38M10 25H18M22 25H29M32 25H38M10 31H18M22 31H29M32 31H38M10 37H18M22 37H38" stroke="#6b9bcf" stroke-width="2.500"/>'),
    plain('Field calculator', '<path d="M6 4V42M42 4V42M6 9H42M6 21H42M6 33H42M3 40H45V44H3Z" stroke="#555" stroke-width="2.500"/><g stroke-width="1.500"><circle cx="19" cy="9" r="4.500" fill="#f08a8a" stroke="#b33"/><circle cx="35" cy="9" r="4.500" fill="#f08a8a" stroke="#b33"/><circle cx="15" cy="21" r="4.500" fill="#b8e8b8" stroke="#5a5"/><circle cx="24" cy="21" r="4.500" fill="#b8e8b8" stroke="#5a5"/><circle cx="15" cy="33" r="4.500" fill="#b8d8f0" stroke="#58a"/><circle cx="25" cy="33" r="4.500" fill="#b8d8f0" stroke="#58a"/><circle cx="35" cy="33" r="4.500" fill="#b8d8f0" stroke="#58a"/></g>'),
    plain('Statistics', '<path d="M10 5H37L38 14H35Q34 9 28 9H20L30 23L18 38H30Q36 38 37 32H39L37 43H9V41L22 25L10 7Z" fill="#b010b0" stroke="#8a0a8a"/>'),
    menuS('Measure', '<path d="M3 14H43M4 9V19M42 9V19" stroke="#405a7a" stroke-width="4"/><rect x="2" y="25" width="43" height="14" rx="1" fill="#ddd" stroke="#555" stroke-width="3"/><path d="M8 26V32M14 26V35M20 26V32M26 26V35M32 26V32M38 26V35" stroke="#555" stroke-width="2"/>'),
    plain('Map tips', '<circle cx="12" cy="38" r="7" fill="#7fc47f" stroke="#4d6d4d" stroke-width="2"/><path d="M10 3H39Q46 5 46 12V20Q45 26 39 27H26L15 37L19 27H10Q3 25 3 18V11Q4 4 10 3Z" fill="#fcf08a" stroke="#d0a816" stroke-width="3"/>'),
    menu('Text annotation', '<path d="M2 3H45V33H18L4 45L10 33H2Z" fill="#e9f1f6" stroke="#888" stroke-width="2"/><path d="M14 13V9H34V13M24 9V28M20 28H28" stroke="#555" stroke-width="3"/>'),
    handle,
    plain('Current edits', faded(pencil(2, '#b98a78') + pencil(12, '#ea6a3c')) + '<path d="M36 38H48L42 47Z" fill="#888"/>'),
    plain('Toggle editing', pencil(8, '#ecd83a')),
    plain('Save edits', faded('<rect x="4" y="3" width="38" height="39" rx="3" fill="#7f9fc0" stroke="#456" stroke-width="2"/><path d="M11 4H36V21H11ZM13 28H32V42H13Z" fill="#eee"/><path d="M15 9H31M15 13H31M15 17H31" stroke="#777" stroke-width="2"/><path d="M16 30H22V40H16Z" fill="#7fa8d6"/><path d="M29 47L30 39L42 20L47 23L35 42Z" fill="#ea6a3c" stroke="#855"/>')),
    plain('Add feature', faded(blob() + star)),
    menu('Add circular string', faded('<path d="M6 38Q4 22 14 14Q24 5 38 6" stroke="#8cc58c" stroke-width="5"/><path d="M3 35H9V42H3ZM10 11H16V18H10ZM34 3H40V9H34Z" fill="#fff" stroke="#555" stroke-width="2"/>' + star)),
    plain('Move feature', faded(blob() + badge('#345a7c', '<path d="M4 8H11V4L18 10.500L11 17V13H4Z" fill="#fff" stroke="none"/>'))),
    plain('Node tool', faded('<path d="M5 46L12 10H38" stroke="#555" stroke-width="3"/><circle cx="12" cy="10" r="5" fill="#eee" stroke="#555" stroke-width="2"/><path d="M18 24L40 44" stroke="#d09030" stroke-width="7"/><path d="M38 22L18 45" stroke="#e8c820" stroke-width="7"/><path d="M16 18L24 28M40 18L30 28" stroke="#ddd" stroke-width="4"/>')),
    `<button aria-label="More tools" class="ml-auto grid w-[38px] shrink-0 place-items-center">${svg('<path d="M6 8L18 24L6 40M24 8L36 24L24 40" stroke="#777" stroke-width="6"/>', 'size-6 shrink-0')}</button>`,
    '<span class="-ml-1 flex w-6 shrink-0">' + grip + '</span>',
    `<button title="GPS" aria-label="GPS" class="grid w-[68px] shrink-0 place-items-center">${svg('<path d="M4 9H18V23H4ZM28 8H44V22H28Z" fill="#b5d0ee" stroke="#2e5580" stroke-width="3"/><path d="M16 4H28V26H16Z" fill="#5f8fc4" stroke="#22456c" stroke-width="3"/><path d="M14 28Q14 36 24 37M8 28Q8 41 22 42M3 27Q2 45 18 46M22 26V31" stroke="#34557c" stroke-width="2"/>')}</button>`
  ].join('');

  document.getElementById('bar2').innerHTML = [
    handle,
    plain('Advanced digitizing', '<path d="M33 2H46V44H33Z" fill="#e9e096" stroke="#aaa45a" stroke-width="2"/><path d="M39 8H46M39 14H46M39 20H46M39 26H46" stroke="#99944a" stroke-width="2"/><path d="M1 1L47 46H1ZM11 26V37H22Z" fill="#eeb49a" fill-rule="evenodd" stroke="#a87a66" stroke-width="2"/>'),
    plain('Snapping', '<path d="M22 8L31 3L39 20Q44 38 28 43Q14 44 5 31L3 25L12 20L18 30Q25 36 29 28Q30 24 22 8Z" fill="#dc6060" stroke="#b04444" stroke-width="2"/><path d="M22 8L31 3L34 10L26 15ZM3 25L12 20L16 27L8 33Z" fill="#fff" stroke="#c55" stroke-width="1.500"/><path d="M5 5L16 12L8 16L18 20" stroke="#e0c040" stroke-width="2"/>'),
    plain('Undo', '<path d="M6 19L18 6V14Q41 13 41 30Q40 42 26 43Q34 36 30 28Q26 23 18 24V33Z" fill="#e6ae8a" stroke="#d29572" stroke-width="2"/>'),
    plain('Redo', '<path d="M42 19L30 6V14Q7 13 7 30Q8 42 22 43Q14 36 18 28Q22 23 30 24V33Z" fill="#a6cdaa" stroke="#86b48c" stroke-width="2"/>'),
    plain('Rotate feature', faded(blob() + badge('#345a7c', '<path d="M8 17L5 14Q4 5 11 4Q18 6 16 13L12 15V9"/>'))),
    plain('Simplify feature', faded('<circle cx="15" cy="17" r="14" fill="#8cc58c" stroke="#707070" stroke-width="2"/><path d="M22 18H38L47 32L38 46H22L14 32Z" fill="#9cc0de" stroke="#557" stroke-width="2"/><path d="M17 15L27 33" stroke="#333" stroke-width="3"/>')),
    plain('Add ring', faded(blob() + '<circle cx="14" cy="13" r="7" fill="#eee" stroke="#707070" stroke-width="2"/>' + star)),
    plain('Add part', faded(blob('#bbb') + drop + star)),
    plain('Fill ring', faded(blob('#bbb') + '<circle cx="15" cy="13" r="7" fill="#8cc58c" stroke="#707070" stroke-width="2"/>' + star)),
    plain('Delete ring', faded(blob() + '<circle cx="14" cy="13" r="7" fill="#eee" stroke="#707070" stroke-width="2"/>' + cross)),
    plain('Delete part', faded(blob('#bbb') + drop + cross)),
    plain('Reshape', faded('<path d="M5 22H20L15 42Q10 44 8 36Z" fill="#e3bb30" stroke="#a88" stroke-width="2"/>' + blob())),
    plain('Offset curve', faded('<path d="M30 3Q46 2 45 16Q44 26 32 30Q24 44 12 45Q1 42 4 30Q6 22 16 19Q20 8 30 3Z" fill="#8cc58c" stroke="#d0a816" stroke-width="5"/><path d="M29 2Q48 0 46 17Q44 29 33 32Q24 46 11 46Q0 42 2 30Q5 21 15 18Q18 6 29 2Z" stroke="#888"/>')),
    plain('Split features', faded(scissors('#bbb'))),
    plain('Split parts', faded(scissors('#8cc58c'))),
    plain('Merge features', faded('<path d="M14 2Q22 4 20 12H29Q31 1 39 3Q46 6 45 14Q43 23 34 22Q28 20 29 16H19Q18 22 10 22Q2 20 3 11Q5 2 14 2Z" fill="#8cc58c" stroke="#707070" stroke-width="2"/><path d="M17 8H32M17 13H32M17 18H32M13 22Q14 32 28 42" stroke="#555" stroke-width="2.500"/>')),
    plain('Merge attributes', faded('<path d="M3 3H20V12H3ZM26 3H43V12H26ZM3 18H20V27H3ZM26 18H43V27H26ZM3 33H20V42H3ZM26 33H43V42H26Z" fill="#f4f4f4" stroke="#bbb"/><path d="M3 13H20M26 13H43M3 28H20M26 28H43M3 43H20M26 43H43M14 8L23 4L32 8M14 23L23 19L32 23M14 38L23 34L32 38M23 4V12M23 19V27M23 34V42" stroke="#555" stroke-width="2"/>')),
    menuS('Rotate point symbols', faded('<path d="M24 3V24L41 13Z" fill="#8cc58c" stroke="#777" stroke-width="2"/><path d="M24 28L35 43H13Z" fill="#eee" stroke="#aaa" stroke-width="2"/><path d="M18 4Q3 12 5 28Q7 36 13 40M12 4H19V11" stroke="#555" stroke-width="2.500"/>')),
    handle,
    plain('Draw', pen),
    plain('Rectangle', '<path d="M6 9H42V37H6Z" fill="#f4f4f4" stroke="#5a9db8" stroke-width="2"/><path d="M4 7h5v5H4zM21 7h5v5h-5zM39 7h5v5h-5zM4 21h5v5H4zM39 21h5v5h-5zM4 34h5v5H4zM21 34h5v5h-5zM39 34h5v5h-5z" fill="#f0602c"/>'),
    plain('Buffer', '<path d="M6 9H42V37H6Z" fill="#e4e4e4" stroke="#777" stroke-width="2"/><path d="M13 17H35V29H13Z" fill="#fbd09a" stroke="#666" stroke-width="2"/><path d="M4 7h5v5H4zM39 7h5v5h-5zM4 34h5v5H4zM39 34h5v5h-5zM11 15h5v4h-5zM33 15h5v4h-5zM11 28h5v4h-5zM33 28h5v4h-5z" fill="#f0602c"/>'),
    plain('Wand settings', wand + '<rect x="28" y="28" width="19" height="19" rx="3" fill="#f26a2c"/><path d="M34 32L37 40M38 34L41 43" stroke="#fff" stroke-width="3"/>'),
    plain('Wand', wand),
    plain('Parties', '<g fill="#6e6e6e"><circle cx="17" cy="5" r="4"/><circle cx="34" cy="5" r="4"/><path d="M12 10L18 10L17 24L20 26V44H17V30L13 26L11 46H6L9 26L5 24ZM29 10H39L42 28H39L38 46H35V30H33V46H30L29 28H26Z"/></g>'),
    plain('Import register', book + '<rect x="28" y="26" width="20" height="20" rx="3" fill="#f2602c"/><path d="M33 29L38 34L43 29M33 36L38 41L43 36" stroke="#fff" stroke-width="3"/>'),
    plain('Add to register', book + '<rect x="28" y="26" width="20" height="20" rx="3" fill="#f2602c"/><path d="M38 30V43M32 36H44" stroke="#fff" stroke-width="3"/>'),
    plain('Help', '<g transform="translate(-10 0) scale(1 .85)">' + pen + '</g><rect x="26" y="25" width="20" height="20" rx="3" fill="#f2602c"/><path d="M33 31Q36 27 39 31Q40 34 36 35V38M36 40V43" stroke="#fff" stroke-width="3"/>')
  ].join('');

  const small = (t, i) => `<button title="${t}" aria-label="${t}" class="grid w-[60px] shrink-0 place-items-center">${svg(i, 'size-8')}</button>`;
  const tree = '<path d="M2 5H34M8 5V42M8 22H16M8 40H16" stroke="#888" stroke-width="4"/><path d="M15 17H23V25H15ZM15 34H23V42H15Z" fill="#fff0c0" stroke="#f09020" stroke-width="4"/>';
  document.getElementById('bar3').innerHTML = [
    small('Style', '<path d="M2 20L18 8L26 22L16 44L4 40Z" fill="#f6d860"/><path d="M2 18L12 16L18 28L6 32Z" fill="#6fa8dc"/><path d="M2 30L14 32L18 44L6 42Z" fill="#e04040"/><path d="M44 6L30 24" stroke="#c08a40" stroke-width="6"/><path d="M18 24L34 20L38 30L24 46L14 40Z" fill="#d8a560"/>'),
    small('Add group', '<path d="M4 18V44H24M10 12V38H32V12ZM16 6V30H38V6Z" fill="#eee" stroke="#777" stroke-width="3"/><path d="M24 26V4Q27 0 30 4V26" stroke="#405a7a" stroke-width="3"/><rect x="28" y="30" width="18" height="17" rx="3" fill="#5b9b5b"/><path d="M37 33V44M31 38H43" stroke="#fff" stroke-width="4"/>'),
    small('Visibility', '<path d="M2 22Q22 2 42 18Q40 38 22 38Q8 36 2 22Z" fill="#e8e8e8" stroke="#999" stroke-width="3"/><path d="M4 12Q22 0 44 12" stroke="#aaa" stroke-width="3"/><circle cx="23" cy="22" r="12" fill="#7f9fc8"/><circle cx="23" cy="22" r="6" fill="#111"/><path d="M32 32H48L40 46Z" fill="#222"/>'),
    small('Filter', '<path d="M2 2H46V8H2Z" fill="#fde94c" stroke="#998a20"/><path d="M2 11H46L28 28V44L20 47V28Z" fill="#6b9bcf" stroke="#456f9f" stroke-width="2"/>'),
    `<button title="Filter by expression" aria-label="Filter by expression" class="flex w-[83px] shrink-0 items-center justify-end pr-[7px]">${svg('<path d="M24 9Q20 2 13 4Q7 7 9 13Q11 16 16 16Q6 16 5 24Q6 33 14 32Q21 31 23 24" stroke="#62356b" stroke-width="4"/><path d="M24 28H46L40 34V48H30V34Z" fill="#eee" stroke="#aaa" stroke-width="3"/>', 'size-8 shrink-0')}${arrow}</button>`,
    small('Expand all', tree + '<path d="M30 2H38V26H46L34 46L22 26H30Z" fill="#6b9bcf" stroke="#34557c" stroke-width="2"/>'),
    small('Collapse all', tree + '<path d="M30 44H38V20H46L34 0L22 20H30Z" fill="#6b9bcf" stroke="#34557c" stroke-width="2"/>'),
    small('Remove layer', '<path d="M4 4H40V40H4Z" fill="#f0f0f0" stroke="#888" stroke-width="3"/><rect x="28" y="31" width="19" height="16" rx="3" fill="#ee4a4a"/><path d="M32 39H43" stroke="#fff" stroke-width="4"/>')
  ].join('');
</script>
</body>
</html>
